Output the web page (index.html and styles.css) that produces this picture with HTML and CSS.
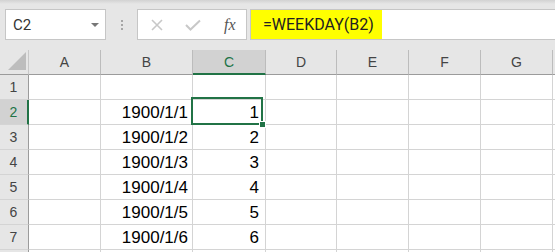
FILE: index.html
```html
<!DOCTYPE html>
<html>
<head>
    <meta charset="utf-8">
    <title>WEEKDAY</title>
    <link rel="stylesheet" href="styles.css">
</head>
<body>
    <div class="toolbar">
        <div class="namebox">
            <span>C2</span>
            <i class="caret"></i>
        </div>
        <div class="grip"><i></i><i></i><i></i></div>
        <div class="buttons">
            <svg class="ico" width="14" height="12" viewBox="0 0 14 12"><path d="M2 1 L12 11 M12 1 L2 11" stroke="#c8c8c8" stroke-width="1.6" fill="none"/></svg>
            <svg class="ico" width="16" height="12" viewBox="0 0 16 12"><path d="M1 6 L5.5 10.5 L15 1.5" stroke="#c8c8c8" stroke-width="2" fill="none"/></svg>
            <span class="fx">fx</span>
        </div>
        <div class="formula">
            <span class="hl">=WEEKDAY(B2)</span>
        </div>
    </div>

    <div class="sheet">
        <div class="corner"><i></i></div>
        <div class="colhead">A</div>
        <div class="colhead">B</div>
        <div class="colhead sel">C</div>
        <div class="colhead">D</div>
        <div class="colhead">E</div>
        <div class="colhead">F</div>
        <div class="colhead">G</div>
        <div class="colhead end"></div>

        <div class="rowhead">1</div>
        <div class="cell"></div><div class="cell"></div><div class="cell"></div><div class="cell"></div><div class="cell"></div><div class="cell"></div><div class="cell"></div><div class="cell end"></div>

        <div class="rowhead sel">2</div>
        <div class="cell"></div><div class="cell">1900/1/1</div><div class="cell num">1</div><div class="cell"></div><div class="cell"></div><div class="cell"></div><div class="cell"></div><div class="cell end"></div>

        <div class="rowhead">3</div>
        <div class="cell"></div><div class="cell">1900/1/2</div><div class="cell num">2</div><div class="cell"></div><div class="cell"></div><div class="cell"></div><div class="cell"></div><div class="cell end"></div>

        <div class="rowhead">4</div>
        <div class="cell"></div><div class="cell">1900/1/3</div><div class="cell num">3</div><div class="cell"></div><div class="cell"></div><div class="cell"></div><div class="cell"></div><div class="cell end"></div>

        <div class="rowhead">5</div>
        <div class="cell"></div><div class="cell">1900/1/4</div><div class="cell num">4</div><div class="cell"></div><div class="cell"></div><div class="cell"></div><div class="cell"></div><div class="cell end"></div>

        <div class="rowhead">6</div>
        <div class="cell"></div><div class="cell">1900/1/5</div><div class="cell num">5</div><div class="cell"></div><div class="cell"></div><div class="cell"></div><div class="cell"></div><div class="cell end"></div>

        <div class="rowhead">7</div>
        <div class="cell"></div><div class="cell">1900/1/6</div><div class="cell num">6</div><div class="cell"></div><div class="cell"></div><div class="cell"></div><div class="cell"></div><div class="cell end"></div>

        <div class="rowhead"></div>
        <div class="cell"></div><div class="cell"></div><div class="cell"></div><div class="cell"></div><div class="cell"></div><div class="cell"></div><div class="cell"></div><div class="cell end"></div>

        <div class="selection"><i class="handle"></i></div>
    </div>
</body>
</html>
```

FILE: styles.css
```css
body{
    margin: 0;
    background: #e6e6e6;
    font-family: "Liberation Sans", Arial, sans-serif;
    overflow: hidden;
}

/* formula bar */
.toolbar{
    height: 50px;
    box-sizing: border-box;
    padding: 9px 0 0 5px;
    display: flex;
    align-items: flex-start;
    background: linear-gradient(#d2d2d2, #e6e6e6 4px);
}
.namebox{
    width: 101px;
    height: 31px;
    box-sizing: border-box;
    border: 1px solid #c6c6c6;
    background: #fff;
    display: flex;
    align-items: center;
    justify-content: space-between;
    padding: 0 6px 0 7px;
    font-family: Roboto, sans-serif;
    font-size: 15px;
    color: #333;
}
.caret{
    width: 0;
    height: 0;
    border-left: 4px solid transparent;
    border-right: 4px solid transparent;
    border-top: 4px solid #777;
    margin-top: 1px;
}
.grip{
    width: 31px;
    height: 31px;
    display: flex;
    flex-direction: column;
    align-items: center;
    justify-content: center;
    gap: 2px;
}
.grip i{
    width: 2px;
    height: 2px;
    background: #a6a6a6;
}
.buttons{
    width: 110px;
    height: 31px;
    box-sizing: border-box;
    border: 1px solid #c6c6c6;
    background: #fff;
    display: flex;
    align-items: center;
    padding: 0 0 0 12px;
    gap: 21px;
}
.fx{
    font-family: "Liberation Serif", serif;
    font-style: italic;
    font-size: 16px;
    color: #555;
    margin-left: 2px;
}
.formula{
    flex: 1;
    height: 31px;
    box-sizing: border-box;
    margin-left: 3px;
    border: 1px solid #c6c6c6;
    border-right: none;
    background: #fff;
    display: flex;
}
.hl{
    background: #ffff00;
    padding: 0 8px 0 12px;
    font-family: Roboto, sans-serif;
    font-size: 16px;
    line-height: 29px;
    color: #222;
}

/* grid */
.sheet{
    position: relative;
    display: grid;
    grid-template-columns: 29px 72px 92px 73px 71px 72px 72px 72px 1fr;
    grid-auto-rows: 25px;
    background: #fff;
}
.corner, .colhead, .rowhead{
    background: #e6e6e6;
    color: #444;
    font-size: 14px;
    box-sizing: border-box;
    display: flex;
    align-items: center;
    justify-content: center;
}
.corner{
    border-right: 1px solid #c8c8c8;
    border-bottom: 1px solid #9b9b9b;
    position: relative;
}
.corner i{
    position: absolute;
    left: 8px;
    top: 2px;
    width: 0;
    height: 0;
    border-left: 18px solid transparent;
    border-bottom: 18px solid #bdbdbd;
}
.colhead{
    border-right: 1px solid #bcbcbc;
    border-bottom: 1px solid #9b9b9b;
}
.rowhead{
    border-right: 1px solid #9b9b9b;
    border-bottom: 1px solid #d4d4d4;
    padding-right: 1px;
}
.colhead.sel{
    background: #d2d2d2;
    color: #217346;
    border-bottom: 2px solid #217346;
}
.rowhead.sel{
    background: #d2d2d2;
    color: #217346;
    border-right: 2px solid #217346;
    padding-right: 0;
}
.colhead.end{
    border-right: none;
}
.cell{
    box-sizing: border-box;
    border-right: 1px solid #d4d4d4;
    border-bottom: 1px solid #d4d4d4;
    text-align: right;
    padding: 0 4px 0 0;
    font-size: 17px;
    line-height: 25px;
    color: #000;
    white-space: nowrap;
}
.cell.num{
    padding-right: 6px;
}
.cell.end{
    border-right: none;
}
.selection{
    position: absolute;
    left: 191px;
    top: 47px;
    width: 72px;
    height: 28px;
    box-sizing: border-box;
    border: 2px solid #217346;
}
.handle{
    position: absolute;
    right: -5px;
    bottom: -5px;
    width: 5px;
    height: 5px;
    background: #217346;
    border: 1px solid #fff;
}
```
